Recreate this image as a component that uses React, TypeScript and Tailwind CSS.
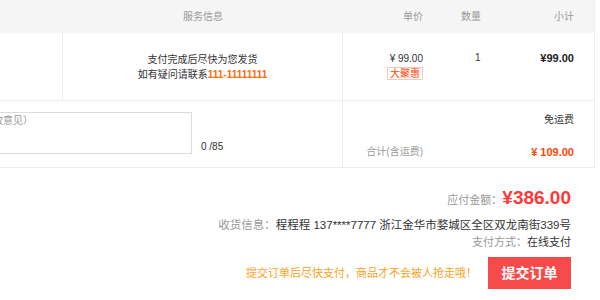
export default function App() {
  const font = { fontFamily: '"Liberation Sans", "Noto Sans CJK SC", sans-serif' };

  return (
    <div className="w-[600px] h-[300px] bg-white overflow-hidden text-[#333]" style={font}>
      {/* table, left part falls out of view */}
      <div className="ml-[-300px] w-[895px] border-r border-[#ececec]">
        {/* header */}
        <div className="flex h-[33px] items-center bg-[#f5f5f5] text-[10px] text-[#999]">
          <div className="w-[363px]" />
          <div className="w-[280px] text-center">服务信息</div>
          <div className="w-[88px] text-right pr-[8px]">单价</div>
          <div className="w-[80px] text-center">数量</div>
          <div className="w-[83px] text-right pr-[20px]">小计</div>
        </div>

        {/* item row */}
        <div className="flex h-[68px] border-b border-[#ececec]">
          <div className="w-[363px] border-r border-[#ececec]" />
          <div className="w-[280px] border-r border-[#ececec] flex flex-col items-center justify-center text-[10px] leading-[15px] text-[#333]">
            <p>支付完成后尽快为您发货</p>
            <p>
              如有疑问请联系<span className="font-bold text-[#ff6a00]">111-11111111</span>
            </p>
          </div>
          <div className="w-[87px] pr-[7px] pt-[19px] flex flex-col items-end">
            <span className="text-[10px] leading-[14px] text-[#333]">¥ 99.00</span>
            <span className="mt-px border border-[#fcc7b8] px-[2px] text-[10px] leading-[11px] text-[#ff4400]">大聚惠</span>
          </div>
          <div className="w-[80px] pt-[18px] pl-[45px] text-[10px] leading-[14px]">1</div>
          <div className="w-[84px] pt-[18px] pr-[20px] text-right text-[11px] leading-[14px] font-bold text-[#222]">¥99.00</div>
        </div>

        {/* message + shipping row */}
        <div className="flex h-[67px] border-b border-[#ececec]">
          <div className="w-[643px] border-r border-[#ececec] flex items-end pt-[11px] pb-[14px]">
            <textarea
              className="ml-[38px] h-[42px] w-[454px] resize-none border border-[#dcdcdc] px-[4px] py-[1px] text-[10px] leading-[14px] text-[#999] placeholder:text-[#999] outline-none self-start"
              style={font}
              placeholder="选填：对本次交易的补充说明（建议填写已和卖家达成一致意见）"
            />
            <span className="ml-[9px] text-[10px] leading-[12px] text-[#333]">0 /85</span>
          </div>
          <div className="w-[251px] flex flex-col pt-[11px]">
            <div className="text-right pr-[20px] text-[10px] leading-[16px] text-[#333]">免运费</div>
            <div className="flex items-center mt-[16px]">
              <span className="w-[80px] text-right text-[10px] leading-[16px] text-[#999]">合计(含运费)</span>
              <span className="flex-1 text-right pr-[20px] text-[11px] leading-[16px] font-bold text-[#ff4400]">¥ 109.00</span>
            </div>
          </div>
        </div>
      </div>

      {/* summary */}
      <div className="flex flex-col items-end pr-[29px] pt-[18px]">
        <div className="flex items-baseline h-[24px]">
          <span className="text-[11px] text-[#999]">应付金额：</span>
          <span className="text-[19px] font-bold text-[#ff3838] leading-[24px]">¥386.00</span>
        </div>
        <div className="mt-[6px] text-[11.5px] leading-[18px] text-[#333]">
          <span className="text-[#999]">收货信息：</span>程程程 137****7777 浙江金华市婺城区全区双龙南街339号
        </div>
        <div className="text-[11px] leading-[16px] text-[#333]">
          <span className="text-[#999]">支付方式：</span>在线支付
        </div>
        <div className="mt-[7px] flex items-center">
          <span className="text-[11px] text-[#f7a21c] mr-[11px]">提交订单后尽快支付，商品才不会被人抢走哦！</span>
          <button className="h-[32px] w-[83px] bg-[#f74b4b] text-white text-[14px] font-bold" style={font}>
            提交订单
          </button>
        </div>
      </div>
    </div>
  );
}
